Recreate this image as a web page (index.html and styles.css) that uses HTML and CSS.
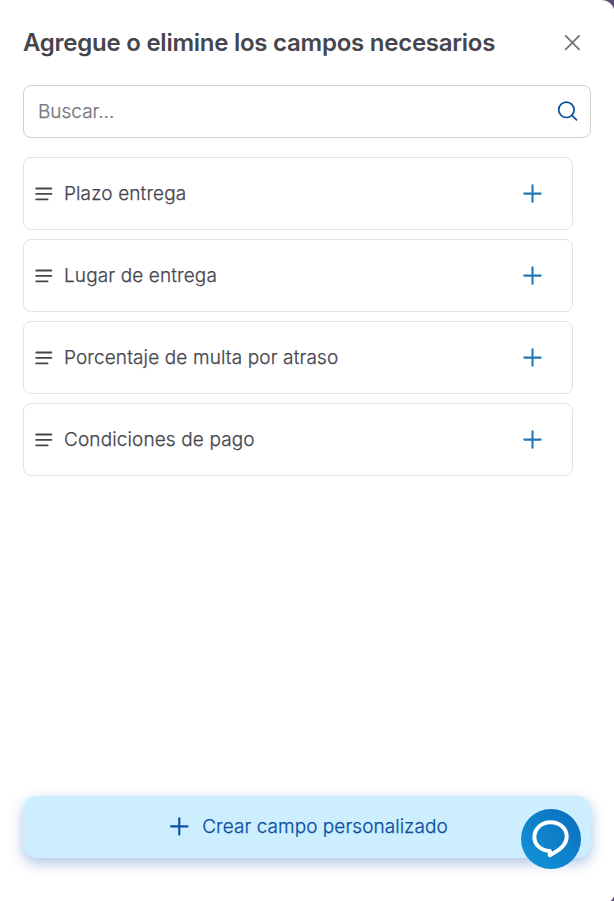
FILE: index.html
```html
<!DOCTYPE html>
<html lang="es">
<head>
<meta charset="UTF-8" />
<meta name="viewport" content="width=device-width, initial-scale=1.0" />
<title>Campos</title>
<link rel="stylesheet" href="styles.css">
</head>
<body>
<div class="modal">
  <div class="modal-header">
    <h1>Agregue o elimine los campos necesarios</h1>
    <button class="close-btn" type="button" aria-label="Cerrar">
      <svg width="16" height="16" viewBox="0 0 16 16"><path d="M1.7 0.9l13.4 13.4M15.1 0.9L1.7 14.3" /></svg>
    </button>
  </div>

  <div class="search-box">
    <input type="text" placeholder="Buscar..." />
    <svg width="22" height="22" viewBox="0 0 22 22"><circle cx="10.4" cy="8.8" r="7.7" /><path d="M16 14.4l4.5 4.4" /></svg>
  </div>

  <ul class="field-list">
    <li>
      <svg class="lines" width="18" height="14" viewBox="0 0 18 14"><path d="M1.2 1.5h15.2M1.2 6.9h15.2M1.2 12.4h11.4" /></svg>
      <span>Plazo entrega</span>
      <svg class="plus" width="20" height="20" viewBox="0 0 20 20"><path d="M10.5 1.4v16.4M2.3 9.6h16.4" /></svg>
    </li>
    <li>
      <svg class="lines" width="18" height="14" viewBox="0 0 18 14"><path d="M1.2 1.5h15.2M1.2 6.9h15.2M1.2 12.4h11.4" /></svg>
      <span>Lugar de entrega</span>
      <svg class="plus" width="20" height="20" viewBox="0 0 20 20"><path d="M10.5 1.4v16.4M2.3 9.6h16.4" /></svg>
    </li>
    <li>
      <svg class="lines" width="18" height="14" viewBox="0 0 18 14"><path d="M1.2 1.5h15.2M1.2 6.9h15.2M1.2 12.4h11.4" /></svg>
      <span>Porcentaje de multa por atraso</span>
      <svg class="plus" width="20" height="20" viewBox="0 0 20 20"><path d="M10.5 1.4v16.4M2.3 9.6h16.4" /></svg>
    </li>
    <li>
      <svg class="lines" width="18" height="14" viewBox="0 0 18 14"><path d="M1.2 1.5h15.2M1.2 6.9h15.2M1.2 12.4h11.4" /></svg>
      <span>Condiciones de pago</span>
      <svg class="plus" width="20" height="20" viewBox="0 0 20 20"><path d="M10.5 1.4v16.4M2.3 9.6h16.4" /></svg>
    </li>
  </ul>

  <button class="create-btn" type="button">
    <svg class="plus" width="20" height="20" viewBox="0 0 20 20"><path d="M10.3 2.2v16.4M2.1 10.4h16.4" /></svg>
    <span>Crear campo personalizado</span>
  </button>
</div>

<div class="chat-btn">
  <svg width="60" height="60" viewBox="0 0 60 60"><path d="M28.8 46.2V42C19.5 41.4 13.4 35.5 13.4 28.2C13.4 19.8 20.2 13.3 29.6 13.3C39.2 13.3 45.7 19.8 45.7 27.5C45.7 36 38.5 41 28.8 46.2Z" /></svg>
</div>
</body>
</html>
```

FILE: styles.css
```css
* {
  box-sizing: border-box;
}

body {
  margin: 0;
  height: 901px;
  overflow: hidden;
  background-color: #5c4f72;
  font-family: Inter, "Liberation Sans", sans-serif;
  color: #45454e;
}

svg {
  display: block;
  flex: none;
  fill: none;
  stroke: currentColor;
  stroke-width: 2.1;
  stroke-linecap: round;
  stroke-linejoin: round;
}

button {
  border: none;
  padding: 0;
  font-family: inherit;
  cursor: pointer;
}

.modal {
  display: flex;
  flex-direction: column;
  width: 615px;
  height: 905px;
  padding: 26px 24px 47px 23px;
  background-color: #fff;
  border-radius: 0 14px 14px 0;
}

.modal-header {
  display: flex;
  justify-content: space-between;
  align-items: center;
  height: 33px;
  padding-right: 11px;
}

h1 {
  margin: 0;
  font-size: 24px;
  font-weight: 600;
  line-height: 33px;
  letter-spacing: -0.25px;
  white-space: nowrap;
}

.close-btn {
  background: none;
  color: #73737c;
}

.close-btn svg {
  stroke-width: 1.8;
}

.search-box {
  display: flex;
  align-items: center;
  height: 53px;
  margin-top: 26px;
  padding: 0 12px 0 14px;
  border: 1px solid #d0d0d0;
  border-radius: 8px;
  color: #0b4fa0;
}

.search-box input {
  flex: 1;
  min-width: 0;
  padding: 0;
  border: none;
  outline: none;
  font-family: inherit;
  font-size: 19px;
  font-weight: 300;
  -webkit-text-stroke: 0.25px;
}

.search-box input::placeholder {
  color: #777781;
}

.search-box svg {
  stroke-width: 1.7;
}

.field-list {
  display: flex;
  flex-direction: column;
  gap: 9px;
  margin: 19px 18px 0 0;
  padding: 0;
  list-style: none;
}

.field-list li {
  display: flex;
  align-items: center;
  height: 73px;
  padding: 0 30px 0 11px;
  border: 1px solid #e2e2e2;
  border-radius: 8px;
}

.field-list span {
  flex: 1;
  margin-left: 11px;
  font-size: 19px;
  font-weight: 300;
  letter-spacing: 0.12px;
  -webkit-text-stroke: 0.25px;
}

.lines {
  stroke-width: 1.8;
}

.field-list .plus {
  color: #2078b8;
}

.create-btn {
  display: flex;
  justify-content: center;
  align-items: center;
  gap: 13px;
  height: 62px;
  margin-top: auto;
  padding: 0 0 2px 3px;
  background-color: #cceeff;
  border-radius: 14px;
  box-shadow: 0 5px 14px rgba(20, 80, 180, 0.35);
  color: #0b4fa0;
  font-size: 19px;
  font-weight: 300;
  letter-spacing: 0.05px;
  -webkit-text-stroke: 0.25px;
}

.chat-btn {
  position: absolute;
  right: 33px;
  bottom: 32px;
  width: 60px;
  height: 60px;
  border-radius: 50%;
  background: linear-gradient(45deg, #1296d8, #0b6cbd);
  color: #fff;
}

.chat-btn svg {
  stroke-width: 4;
}
```
